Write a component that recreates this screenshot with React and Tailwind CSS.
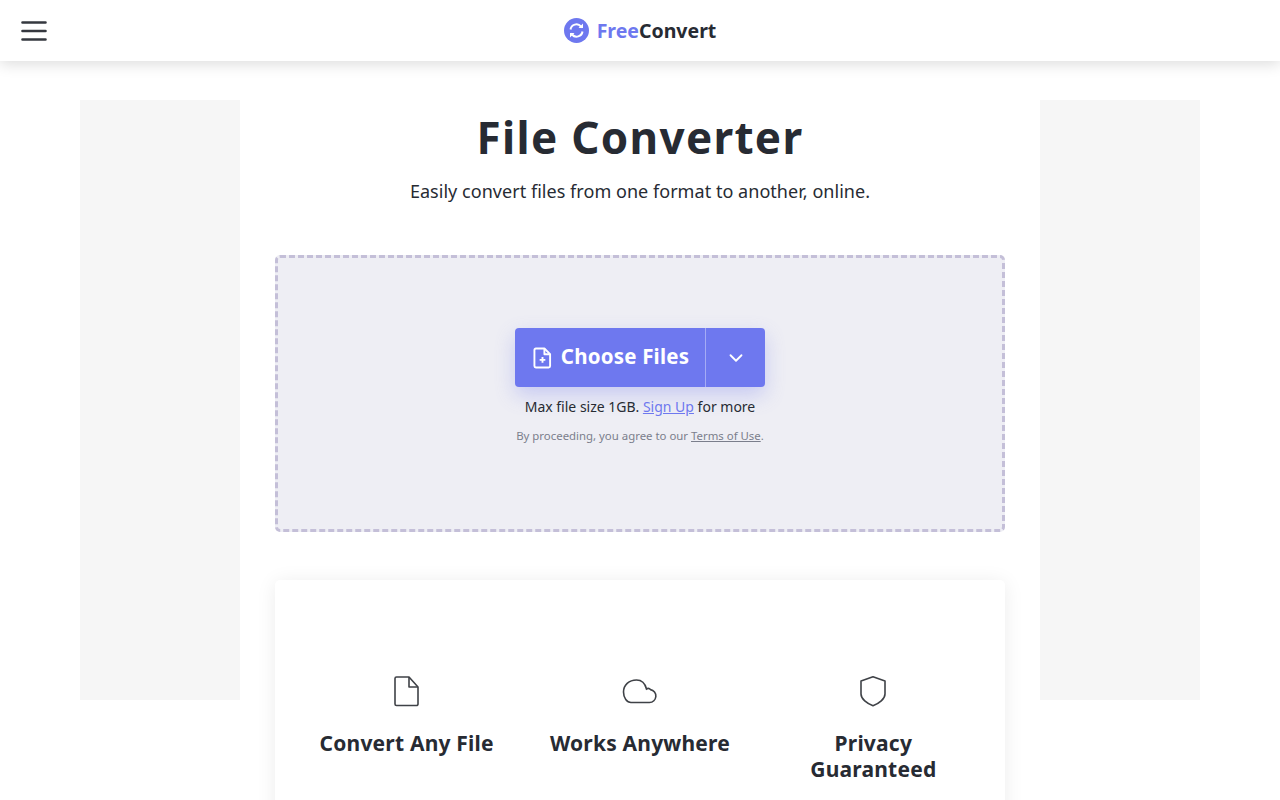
import { ChevronDown } from 'lucide-react'

const FONT = { fontFamily: '"Noto Sans", sans-serif' }

const FEATURES = [
  {
    title: 'Convert Any File',
    icon: (
      <svg width="28" height="32" viewBox="0 0 28 32" fill="none" stroke="#3f4247" strokeWidth="1.6" strokeLinejoin="round">
        <path d="M3.5 2h12.5l9 10v17a1.5 1.5 0 0 1-1.5 1.5h-20A1.5 1.5 0 0 1 2 29V3.5A1.5 1.5 0 0 1 3.5 2z" />
        <path d="M16 2v10h9" />
      </svg>
    ),
  },
  {
    title: 'Works Anywhere',
    icon: (
      <svg width="36" height="28" viewBox="0 0 36 28" fill="none" stroke="#3f4247" strokeWidth="1.6">
        <path d="M9 25.5h18.5a6.5 6.5 0 0 0 1-12.9 3 3 0 0 0-4-.6C23 6 19.5 3 14.5 3 7 3 1.5 8 1.5 15 1.5 21 5 25.5 9 25.5z" />
      </svg>
    ),
  },
  {
    title: 'Privacy Guaranteed',
    icon: (
      <svg width="28" height="32" viewBox="0 0 28 32" fill="none" stroke="#3f4247" strokeWidth="1.6" strokeLinejoin="round">
        <path d="M14 1.8 26 6v13c0 5-6 9.5-12 11.8C8 28.5 2 24 2 19V6z" />
      </svg>
    ),
  },
]

export default function App() {
  return (
    <div className="h-screen overflow-hidden bg-white text-[#272b33]" style={FONT}>
      {/* header */}
      <header className="relative z-10 h-[61px] bg-white shadow-[0_3px_14px_rgba(0,0,0,0.14)] flex items-center justify-center">
        <button className="absolute left-[21px] top-[21px]">
          <svg width="26" height="20" viewBox="0 0 26 20" stroke="#35383f" strokeWidth="2.6" strokeLinecap="round">
            <path d="M1.5 1.5h23M1.5 10h23M1.5 18.5h23" />
          </svg>
        </button>
        <div className="flex items-center gap-[8px]">
          <svg width="25" height="25" viewBox="0 0 25 25">
            <circle cx="12.5" cy="12.5" r="12.5" fill="#6e78ef" />
            <path d="M6.5 11.5a6 6 0 0 1 10.5-3l1 1M18.5 13.5a6 6 0 0 1-10.5 3l-1-1" fill="none" stroke="#fff" strokeWidth="2" />
            <path d="M19 5.5V10h-4.500zM6 19.500V15h4.500z" fill="#fff" />
          </svg>
          <span className="text-[19.5px] font-bold leading-none">
            <span className="text-[#6e78ef]">Free</span>Convert
          </span>
        </div>
      </header>

      {/* ads + main column */}
      <div className="flex justify-center pt-[39px]">
        <div className="w-[160px] h-[600px] bg-[#f6f6f6] shrink-0" />

        <main className="w-[800px] flex flex-col items-center">
          <h1 className="text-[44px] font-bold leading-[75px] tracking-[1.3px]">File Converter</h1>
          <p className="text-[18px] leading-[28px] mt-[2px] tracking-[0.04px]">Easily convert files from one format to another, online.</p>

          <section className="mt-[50px] w-[730px] h-[277px] rounded-[5px] border-[3px] border-dashed border-[#c4bfd8] bg-[#eeeef4] flex flex-col items-center pt-[70px]">
            <div className="flex h-[59px] w-[250px] rounded-[4px] bg-[#6e78ef] text-white shadow-[0_8px_20px_rgba(110,120,239,0.3)]">
              <div className="w-[191px] pl-[2px] flex items-center justify-center gap-[9px] border-r border-[#a5abf5]">
                <svg width="19" height="22" viewBox="0 0 20 22" fill="none" stroke="#fff" strokeWidth="2" strokeLinejoin="round">
                  <path d="M3 1h9l6 6v12.5a1.5 1.5 0 0 1-1.5 1.5H3a1.5 1.5 0 0 1-1.5-1.5V2.500A1.500 1.500 0 0 1 3 1z" />
                  <path d="M12 1v6h6M10 10v6M7 13h6" />
                </svg>
                <span className="pb-[2px] text-[20.5px] font-bold tracking-[0.2px]">Choose Files</span>
              </div>
              <div className="flex-1 flex items-center justify-center">
                <ChevronDown size={22} strokeWidth={2} />
              </div>
            </div>
            <p className="mt-[10px] text-[14px] leading-[20px]">
              Max file size 1GB. <a className="text-[#6e78ef] underline">Sign Up</a> for more
            </p>
            <p className="mt-[10px] text-[11.4px] leading-[18px] text-[#7b7e8c]">
              By proceeding, you agree to our <a className="underline">Terms of Use</a>.
            </p>
          </section>

          <section className="mt-[48px] w-[730px] rounded-[5px] bg-white shadow-[0_2px_20px_rgba(0,0,0,0.08)] grid grid-cols-3 px-[15px] pt-[93px] pb-[80px]">
            {FEATURES.map(f => (
              <div key={f.title} className="flex flex-col items-center text-center px-[20px]">
                <div className="h-[36px] flex items-center justify-center">{f.icon}</div>
                <h3 className="mt-[21px] text-[21px] font-bold leading-[26px] tracking-[0.2px]">{f.title}</h3>
              </div>
            ))}
          </section>
        </main>

        <div className="w-[160px] h-[600px] bg-[#f6f6f6] shrink-0" />
      </div>
    </div>
  )
}
